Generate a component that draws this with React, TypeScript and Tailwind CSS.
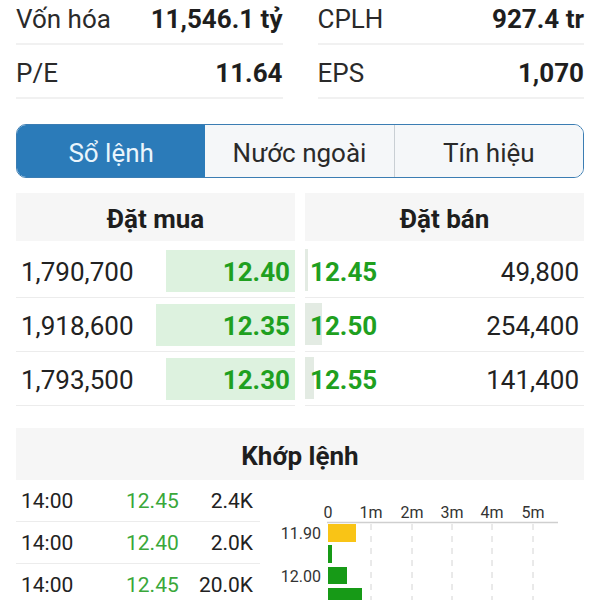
import React from "react";

const GREEN = "text-[#1fa01f]";

function Stat({ label, value }: { label: string; value: string }) {
  return (
    <div className="flex h-[54px] items-center justify-between border-b-2 border-[#f1f1f1] pt-[4px]">
      <span className="text-[26px] text-[#2a2a2a]">{label}</span>
      <span className="text-[26px] font-bold text-[#1e1e1e]">{value}</span>
    </div>
  );
}

const bids = [
  { qty: "1,790,700", price: "12.40", w: 129 },
  { qty: "1,918,600", price: "12.35", w: 139 },
  { qty: "1,793,500", price: "12.30", w: 129 },
];
const asks = [
  { qty: "49,800", price: "12.45", w: 3 },
  { qty: "254,400", price: "12.50", w: 17 },
  { qty: "141,400", price: "12.55", w: 9 },
];
const trades = [
  { t: "14:00", p: "12.45", v: "2.4K" },
  { t: "14:00", p: "12.40", v: "2.0K" },
  { t: "14:00", p: "12.45", v: "20.0K" },
];

function Chart() {
  const ticks = [
    { l: "0", x: 68 },
    { l: "1m", x: 111 },
    { l: "2m", x: 152 },
    { l: "3m", x: 192 },
    { l: "4m", x: 232 },
    { l: "5m", x: 273 },
  ];
  return (
    <svg width="340" height="120" className="block" style={{ fontFamily: "Roboto, sans-serif" }}>
      {ticks.map((t) => (
        <text key={t.l} x={t.x} y={38} textAnchor="middle" fontSize="16" fill="#333">
          {t.l}
        </text>
      ))}
      <line x1="67" y1="42.5" x2="298" y2="42.5" stroke="#cfcfcf" strokeWidth="1.5" />
      {ticks.slice(1).map((t) => (
        <line key={t.l} x1={t.x} y1="44" x2={t.x} y2="120" stroke="#d4d4d4" strokeWidth="1" strokeDasharray="6 6" />
      ))}
      <text x="61" y="59" textAnchor="end" fontSize="16" fill="#333">11.90</text>
      <text x="61" y="102" textAnchor="end" fontSize="16" fill="#333">12.00</text>
      <rect x="68" y="44" width="28" height="18" fill="#f9c416" />
      <rect x="68" y="65" width="4" height="18" fill="#179a17" />
      <rect x="68" y="87" width="19" height="17" fill="#179a17" />
      <rect x="68" y="108" width="34" height="18" fill="#179a17" />
    </svg>
  );
}

export default function App() {
  return (
    <div
      className="h-[600px] w-[600px] overflow-hidden bg-white"
      style={{ fontFamily: "Roboto, 'Noto Sans', sans-serif" }}
    >
      <div className="-mt-[9px] grid grid-cols-2 gap-x-[35px] px-4">
        <Stat label="Vốn hóa" value="11,546.1 tỷ" />
        <Stat label="CPLH" value="927.4 tr" />
        <Stat label="P/E" value="11.64" />
        <Stat label="EPS" value="1,070" />
      </div>

      <div className="mx-4 mt-[25px] flex h-[54px] overflow-hidden rounded-[10px] border-[1.5px] border-[#3b7db3] text-[26px]">
        <div className="flex flex-1 items-center justify-center bg-[#2b7bb9] pt-[5px] text-[#eaf5fc]">Sổ lệnh</div>
        <div className="flex flex-1 items-center justify-center border-r border-[#c9cfd4] bg-[#f5f7f9] pt-[5px] text-[#2a2a2a]">
          Nước ngoài
        </div>
        <div className="flex flex-1 items-center justify-center bg-[#f5f7f9] pt-[5px] text-[#2a2a2a]">Tín hiệu</div>
      </div>

      <div className="mx-4 mt-[15px] grid grid-cols-2 gap-x-[10px]">
        <div className="flex h-[48px] items-center justify-center bg-[#f6f6f6] pt-[4px] text-[26px] font-bold text-[#1e1e1e]">
          Đặt mua
        </div>
        <div className="flex h-[48px] items-center justify-center bg-[#f6f6f6] pt-[4px] text-[26px] font-bold text-[#1e1e1e]">
          Đặt bán
        </div>
        <div className="mt-[3px] flex flex-col">
          {bids.map((b) => (
            <div key={b.price} className="flex h-[54px] items-center justify-between border-b border-[#ececec]">
              <span className="translate-y-[2px] pl-[5px] text-[26px] text-[#222]">{b.qty}</span>
              <div
                className="flex h-[42px] items-center justify-end bg-[#ddf2df] pr-[5px]"
                style={{ width: b.w }}
              >
                <span className={`translate-y-[2px] text-[26px] font-bold ${GREEN}`}>{b.price}</span>
              </div>
            </div>
          ))}
        </div>
        <div className="mt-[3px] flex flex-col">
          {asks.map((a) => (
            <div key={a.price} className="relative flex h-[54px] items-center justify-between border-b border-[#ececec]">
              <div className="absolute left-0 top-[5px] h-[42px] bg-[#e3ebe3]" style={{ width: a.w }} />
              <span className={`relative translate-y-[2px] pl-[5px] text-[26px] font-bold ${GREEN}`}>{a.price}</span>
              <span className="relative translate-y-[2px] pr-[5px] text-[26px] text-[#222]">{a.qty}</span>
            </div>
          ))}
        </div>
      </div>

      <div className="mx-4 mt-[22px] flex h-[52px] items-center justify-center bg-[#f6f6f6] pt-[4px] text-[26px] font-bold text-[#1e1e1e]">
        Khớp lệnh
      </div>

      <div className="ml-4 flex">
        <div className="w-[244px] shrink-0">
          {trades.map((t, i) => (
            <div key={i} className="flex h-[42px] items-center border-b border-[#ececec] pt-[2px] text-[21px]">
              <span className="w-[110px] pl-[5px] text-[#222]">{t.t}</span>
              <span className="text-[#3aa83a]">{t.p}</span>
              <span className="ml-auto pr-[7px] text-[#222]">{t.v}</span>
            </div>
          ))}
        </div>
        <Chart />
      </div>
    </div>
  );
}
